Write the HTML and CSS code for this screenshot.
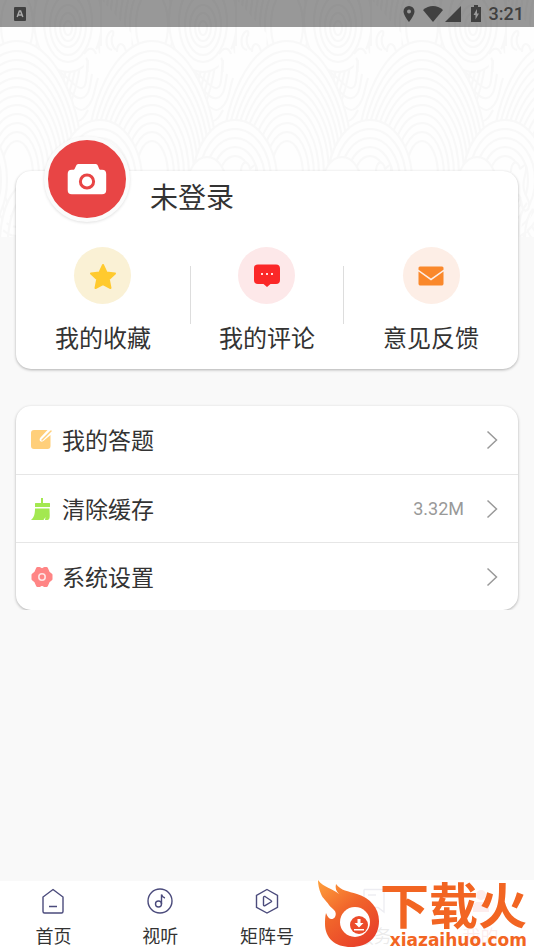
FILE: index.html
```html
<!DOCTYPE html>
<html lang="zh-CN">
<head>
    <meta charset="UTF-8">
    <meta name="viewport" content="width=device-width, initial-scale=1.0">
    <title>我的</title>
    <link rel="stylesheet" href="styles.css">
</head>
<body>
    <div class="page">
        <header class="hero">
            <svg class="waves" aria-hidden="true">
                <defs>
                    <g id="swirl">
                        <ellipse cx="68" cy="20" rx="34" ry="52"/>
                        <ellipse cx="68" cy="22" rx="24" ry="40"/>
                        <ellipse cx="68" cy="25" rx="18" ry="30"/>
                        <ellipse cx="68" cy="26" rx="13" ry="21"/>
                        <ellipse cx="68" cy="27" rx="8" ry="14"/>
                        <ellipse cx="68" cy="28" rx="4" ry="7"/>
                        <path d="M84 54c6-8 12-8 16 0l2-54 30 34-4 70-46 30z" stroke="none"/>
                        <path fill="none" d="M101 0v46M112 50c-8-2-6-14-2-18 4-3 4 2 2 5-1 4 0 10 4 13M117 52c0-8 4-10 7-6l2 5M84 54c5-8 10-6 12 0M86 58c4 4 0 10 2 14"/>
                        <path fill="none" d="M56 72c10 0 16 14 24 16s6-16 8-28M62 88c8 0 12 12 20 10s8-14 10-24M66 104c10 0 12 10 20 4s8-18 12-30M70 120c10 4 14-2 18-10"/>
                    </g>
                    <g id="hill">
                        <ellipse cx="17" cy="175" rx="66" ry="134"/>
                        <ellipse cx="17" cy="175" rx="62" ry="124"/>
                        <ellipse cx="17" cy="175" rx="58" ry="115"/>
                        <ellipse cx="17" cy="175" rx="54" ry="106"/>
                        <ellipse cx="17" cy="175" rx="50" ry="97"/>
                        <ellipse cx="17" cy="175" rx="46" ry="88"/>
                        <ellipse cx="17" cy="175" rx="42" ry="79"/>
                        <ellipse cx="17" cy="175" rx="37" ry="70"/>
                        <ellipse cx="17" cy="175" rx="32" ry="61"/>
                        <ellipse cx="17" cy="175" rx="27" ry="52"/>
                        <ellipse cx="17" cy="175" rx="22" ry="43"/>
                        <ellipse cx="17" cy="175" rx="16" ry="34"/>
                    </g>
                    <g id="mound">
                        <ellipse cx="100" cy="180" rx="42" ry="60"/>
                        <ellipse cx="100" cy="180" rx="36" ry="51"/>
                        <ellipse cx="100" cy="180" rx="30" ry="42"/>
                        <ellipse cx="100" cy="180" rx="23" ry="33"/>
                        <ellipse cx="100" cy="180" rx="16" ry="24"/>
                        <ellipse cx="72" cy="187" rx="20" ry="30"/>
                        <path d="M106 172c0-8 4-12 7-8s1 6 3 4 6-6 5 2-4 12-2 20 6 10 5 16-6 6-7 0-1-8-4-12M108 237c-3-20 2-34 8-40M114 237c-1-18 3-28 8-34M120 237c0-14 3-22 8-28M0 237c2-30 12-50 26-54M8 237c2-24 10-40 22-46"/>
                    </g>
                    <pattern id="wave" width="135" height="237" patternUnits="userSpaceOnUse">
                        <g class="wave-lines">
                            <use href="#hill" y="-150"/>
                            <use href="#hill" x="135" y="-150"/>
                            <use href="#swirl"/>
                            <use href="#hill"/>
                            <use href="#hill" x="135"/>
                            <use href="#mound"/>
                            <use href="#mound" x="-135"/>
                        </g>
                    </pattern>
                </defs>
                <rect width="100%" height="100%" fill="url(#wave)"/>
            </svg>
            <div class="status-bar">
                <svg class="app-badge" width="12" height="14" viewBox="0 0 12 14">
                    <rect width="12" height="14" rx="1" fill="#404040"/>
                    <path d="M3.2 10 5.4 4h1.2l2.2 6M4.2 8h3.6" fill="none" stroke="#aaa" stroke-width="1.5"/>
                </svg>
                <svg width="12" height="16" viewBox="0 0 12 16">
                    <path fill="#404040" fill-rule="evenodd" d="M6 0a5.500 5.500 0 0 0-5.500 5.500C.5 9.500 6 16 6 16s5.500-6.500 5.500-10.500A5.500 5.500 0 0 0 6 0zm0 3.600a2 2 0 1 1 0 4 2 2 0 0 1 0-4z"/>
                </svg>
                <svg class="wifi" width="20" height="16" viewBox="0 0 20 16">
                    <path fill="#404040" d="M0 4c6-5.300 14-5.300 20 0L10 16z"/>
                </svg>
                <svg class="signal" width="16" height="16" viewBox="0 0 16 16">
                    <path fill="#404040" d="M16 0v16H0z"/>
                </svg>
                <svg class="battery" width="10" height="17" viewBox="0 0 10 17">
                    <path fill="#404040" d="M3 0h4v2h3v15H0V2h3z"/>
                    <path fill="#999" d="M6 4 2.500 10h2v4.500L8 8.500H6z"/>
                </svg>
                <span class="clock">3:21</span>
            </div>
        </header>

        <main class="main">
            <section class="card profile">
                <div class="user">
                    <button class="avatar" aria-label="头像">
                        <svg width="40" height="32" viewBox="0 0 40 32">
                            <path fill="#fff" d="M11.500 1h17c1.500 0 2 .8 2.500 2l1 2.500c.3.900.8 1.300 1.800 1.300h1.200c3 0 4.200 1.500 4.200 4.200V27c0 3-1.300 4.200-4.200 4.200H4.800C2 31.200.700 30 .700 27V11c0-2.700 1.200-4.200 4.100-4.200H6c1 0 1.500-.4 1.800-1.300L9 3c.5-1.200 1-2 2.500-2z"/>
                            <circle cx="20" cy="18.500" r="6.600" fill="none" stroke="#e84545" stroke-width="3"/>
                        </svg>
                    </button>
                    <h1 class="user-name">未登录</h1>
                </div>
                <div class="shortcuts">
                    <a class="shortcut" href="#">
                        <span class="shortcut-icon yellow">
                            <svg width="28" height="28" viewBox="0 0 28 28">
                                <path fill="#ffca2e" stroke="#ffca2e" stroke-width="2" stroke-linejoin="round" d="m14 3 3.500 7.500 8.500 1-6.200 5.800L21.500 26 14 22l-7.500 4 1.700-8.700L2 11.500l8.500-1z"/>
                            </svg>
                        </span>
                        我的收藏
                    </a>
                    <span class="divider"></span>
                    <a class="shortcut middle" href="#">
                        <span class="shortcut-icon red">
                            <svg width="28" height="28" viewBox="0 0 28 28">
                                <path fill="#fb2828" d="M5 2.500h18c2.700 0 4 1.300 4 4V18c0 2.700-1.300 4-4 4h-5.500L14 25l-3.500-3H5c-2.700 0-4-1.300-4-4V6.500c0-2.700 1.300-4 4-4z"/>
                                <path fill="#ffdede" d="M8 11h2v2H8zM13 11h2v2h-2zM18 11h2v2h-2z"/>
                            </svg>
                        </span>
                        我的评论
                    </a>
                    <span class="divider"></span>
                    <a class="shortcut" href="#">
                        <span class="shortcut-icon orange">
                            <svg width="28" height="28" viewBox="0 0 28 28">
                                <path fill="#fa882b" d="M3 4.500h22c1 0 1.500.8 1.500 1.800v1.400L14 16.500 1.500 7.700V6.300c0-1 .5-1.800 1.500-1.800zM1.500 9.500 14 18.500l12.500-9v12.200c0 1.200-.8 1.800-2 1.800h-21c-1.200 0-2-.6-2-1.800z"/>
                            </svg>
                        </span>
                        意见反馈
                    </a>
                </div>
            </section>

            <div class="menu-wrap">
                <nav class="card menu">
                    <a class="menu-item" href="#">
                        <svg width="22" height="22" viewBox="0 0 22 22">
                            <path fill="#ffcf7a" d="M3 1h13.500l-7 7.500c-1.500 1.700-1 3.500.5 4 1 .4 2-.1 3-1L19.500 6v11c0 2-1 3-3 3H3c-2 0-3-1-3-3V4c0-2 1-3 3-3z"/>
                            <path fill="none" stroke="#ffcf7a" stroke-width="1.400" stroke-linecap="round" d="m20 2-9 9"/>
                        </svg>
                        <span class="menu-label">我的答题</span>
                        <svg class="arrow" width="12" height="20" viewBox="0 0 12 20"><path d="m1.500 1.500 9 8.500-9 8.500"/></svg>
                    </a>
                    <a class="menu-item" href="#">
                        <svg width="22" height="22" viewBox="0 0 22 22">
                            <path fill="#a3e850" d="M10 0h2v5h6c1 0 1 .500 1 1v3H4V6c0-.500 0-1 1-1h5zM4 10.500h14.500c0 4 .500 7 0 9.500-.300 1.300-1 2-2 2h-2.500l.5-3-2 3H0c3-2.500 4-6 4-11.500z"/>
                        </svg>
                        <span class="menu-label">清除缓存</span>
                        <span class="cache-size">3.32M</span>
                        <svg class="arrow" width="12" height="20" viewBox="0 0 12 20"><path d="m1.500 1.500 9 8.500-9 8.500"/></svg>
                    </a>
                    <a class="menu-item" href="#">
                        <svg width="22" height="22" viewBox="0 0 22 22">
                            <path fill="#ff8585" stroke="#ff8585" stroke-width="3" stroke-linejoin="round" d="M6.500 2.500h2L11 4l2.500-1.500h2L17.500 7 20 9v4l-2.500 2-2 4.500h-2L11 18l-2.500 1.500h-2L4.500 15 2 13V9l2.500-2z"/>
                            <circle cx="11" cy="11" r="3.200" fill="none" stroke="#ffe3e3" stroke-width="1.600"/>
                        </svg>
                        <span class="menu-label">系统设置</span>
                        <svg class="arrow" width="12" height="20" viewBox="0 0 12 20"><path d="m1.500 1.500 9 8.500-9 8.500"/></svg>
                    </a>
                </nav>
            </div>
        </main>

        <footer class="tab-bar">
            <a class="tab" href="#">
                <svg width="28" height="28" viewBox="0 0 28 28">
                    <path d="M14 2.500 24 10v14.500c0 1-.5 1.500-1.500 1.500h-17C4.500 26 4 25.500 4 24.500V10zM10 19.500h8"/>
                </svg>
                首页
            </a>
            <a class="tab" href="#">
                <svg width="28" height="28" viewBox="0 0 28 28">
                    <circle cx="14" cy="14" r="12"/>
                    <circle cx="12.500" cy="17" r="3"/>
                    <path d="M15.500 17V7.500c.5 2 1.500 3 3.500 3.500"/>
                </svg>
                视听
            </a>
            <a class="tab" href="#">
                <svg width="28" height="28" viewBox="0 0 28 28">
                    <path d="M14 2.500 24.500 8.300v12L14 26 3.500 20.300v-12z"/>
                    <path d="M10.500 10.500c0-1 .7-1.400 1.500-1l6 4c.8.500.8 1 0 1.500l-6 3.700c-.8.500-1.500 0-1.500-.9z"/>
                </svg>
                矩阵号
            </a>
            <a class="tab" href="#">
                <svg width="28" height="28" viewBox="0 0 28 28">
                    <path d="M4 2.500h20V25l-6-4.500h-4M4 2.500V25M8 8h8"/>
                </svg>
                服务
            </a>
            <a class="tab active" href="#">
                <svg width="28" height="28" viewBox="0 0 28 28">
                    <circle cx="14" cy="8" r="5"/>
                    <path d="M6 25v-5c0-3 2-5 5-5h6c3 0 5 2 5 5v5z"/>
                </svg>
                我的
            </a>
            <div class="watermark">
                <svg class="flame" width="62" height="70" viewBox="0 0 62 70">
                    <defs>
                        <linearGradient id="fire" x1="0" y1="0" x2=".7" y2="1">
                            <stop offset="0" stop-color="#ffa13c"/>
                            <stop offset=".5" stop-color="#f1652b"/>
                            <stop offset="1" stop-color="#e8402a"/>
                        </linearGradient>
                    </defs>
                    <path fill="url(#fire)" d="M1 0c6 8 14 8 21 14-3-3-4-6-3-10 5 7 12 7 21 10 13 4 22 14 22 27 0 16-11 26-28 26-16 0-26-9-26-23 0-4 0-7 1-11 2 6 6 8 9 4 3-6-3-8-6-12C9 20 6 19 4 14 2 9 1 5 1 0z"/>
                    <circle cx="38" cy="42" r="15" fill="#fff"/>
                    <circle cx="42" cy="45" r="9" fill="#ec4b2a"/>
                    <path fill="#fff" d="M40.500 39h3v4h3L42 47.500 37.500 43h3zM37 49h10v1.500H37z"/>
                </svg>
                <div class="brand">
                    <span class="brand-name">下载火</span>
                    <span class="brand-url">xiazaihuo.com</span>
                </div>
            </div>
        </footer>
    </div>
</body>
</html>
```
FILE: styles.css
```css
* {
    box-sizing: border-box;
}
body {
    margin: 0;
    background: #f9f9f9;
    color: #333;
    font-family: Roboto, "Noto Sans CJK SC", sans-serif;
}
a {
    color: inherit;
    text-decoration: none;
}
svg {
    display: block;
    flex: none;
}
.page {
    display: flex;
    flex-direction: column;
    min-height: 100vh;
}

/* header with the wave pattern */
.hero {
    position: relative;
    height: 237px;
    background: #fefefe;
}
.waves {
    position: absolute;
    inset: 0;
    width: 100%;
    height: 100%;
}
.wave-lines {
    fill: #fefefe;
    stroke: #f8f8f8;
    stroke-width: 2px;
}
.status-bar {
    position: relative;
    display: flex;
    align-items: center;
    height: 27px;
    padding: 0 10px 0 14px;
    background: rgba(0, 0, 0, 0.4);
    color: #404040;
}
.app-badge {
    margin-right: auto;
}
.wifi {
    margin-left: 8px;
}
.signal {
    margin-left: 2px;
}
.battery {
    margin: 0 8px 0 10px;
}
.clock {
    font-size: 18px;
    font-weight: 500;
    line-height: 27px;
}

.main {
    position: relative;
    flex: 1;
    margin-top: -66px;
}
.card {
    background: #fff;
    border-radius: 15px;
    box-shadow: 0 1px 3px rgba(0, 0, 0, 0.3);
}

/* profile card */
.profile {
    margin: 0 16px;
    padding-bottom: 13px;
}
.user {
    display: flex;
    align-items: flex-start;
    gap: 20px;
    padding-left: 28px;
}
.avatar {
    display: flex;
    align-items: center;
    justify-content: center;
    width: 86px;
    height: 86px;
    margin-top: -35px;
    padding: 0;
    border: 4px solid #fbfbfb;
    border-radius: 50%;
    background: #e84545;
    box-shadow: 0 1px 3px rgba(0, 0, 0, 0.12);
}
.user-name {
    margin: 8px 0 0;
    font-size: 28px;
    font-weight: 400;
    line-height: 40px;
}
.shortcuts {
    display: flex;
    align-items: center;
    margin-top: 25px;
}
.shortcut {
    display: flex;
    flex: 8;
    flex-direction: column;
    align-items: center;
    gap: 18px;
    font-size: 24px;
    line-height: 34px;
}
.shortcut.middle {
    flex: 7;
}
.shortcut-icon {
    display: flex;
    align-items: center;
    justify-content: center;
    width: 57px;
    height: 57px;
    border-radius: 50%;
}
.yellow {
    background: #faf1d5;
}
.red {
    background: #fde8e9;
}
.orange {
    background: #fdeee6;
}
.divider {
    width: 1px;
    height: 58px;
    margin-bottom: 14px;
    background: #ddd;
}

/* settings list */
.menu-wrap {
    margin-top: 32px;
    padding: 5px 16px 0;
    overflow: hidden;
}
.menu-item {
    display: flex;
    align-items: center;
    height: 68px;
    padding: 0 20px 0 15px;
}
.menu-item + .menu-item {
    border-top: 1px solid #e6e6e6;
}
.menu-label {
    flex: 1;
    margin-left: 9px;
    padding-bottom: 2px;
    font-size: 23px;
}
.cache-size {
    margin-right: 22px;
    color: #999;
    font-size: 18px;
}
.arrow {
    fill: none;
    stroke: #999;
    stroke-width: 1.5px;
}

/* bottom navigation */
.tab-bar {
    position: relative;
    display: flex;
    height: 69px;
    background: #fff;
}
.tab {
    display: flex;
    flex: 1;
    flex-direction: column;
    align-items: center;
    gap: 9px;
    padding-top: 6px;
    font-size: 18px;
    line-height: 26px;
}
.tab svg {
    fill: none;
    stroke: #4b4b7c;
    stroke-width: 1.4px;
}
.tab.active {
    color: #e84545;
}
.tab.active svg {
    fill: #e84545;
    stroke: none;
}

/* site logo laid over the last two tabs */
.watermark {
    position: absolute;
    right: 0;
    bottom: 0;
    display: flex;
    height: 70px;
    padding-right: 7px;
    background: rgba(255, 255, 255, 0.9);
}
.brand {
    display: flex;
    flex-direction: column;
    align-items: flex-end;
    color: #f26522;
}
.brand-name {
    padding: 4px 0 0 1px;
    font-size: 49px;
    font-weight: 700;
    line-height: 48px;
}
.brand-url {
    font-family: "DejaVu Sans", sans-serif;
    font-size: 17px;
    font-weight: 700;
    line-height: 16px;
}
```
